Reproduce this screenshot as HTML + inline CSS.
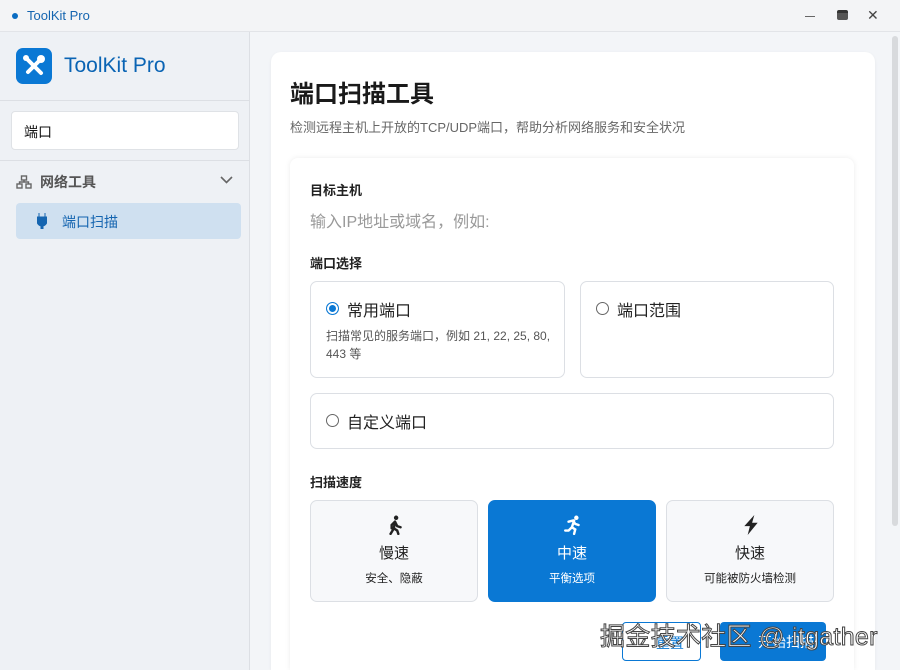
<!DOCTYPE html>
<html style="height:670px;overflow:hidden"><head><meta charset="utf-8"><style>
*{box-sizing:border-box;margin:0;padding:0}
body{width:900px;height:670px;overflow:hidden;font-family:"Liberation Sans","Noto Sans CJK SC",sans-serif;background:#f3f5f8;position:relative;color:#222}
.tb{position:absolute;left:0;top:0;width:900px;height:32px;background:#f3f4f6;border-bottom:1px solid #e2e4e8}
.tb .dot{position:absolute;left:12px;top:13px;width:6px;height:6px;border-radius:50%;background:#0a6cc2}
.tb .t{position:absolute;left:27px;top:8px;font-size:13px;color:#1565b0}
.sb{position:absolute;left:0;top:32px;width:250px;height:638px;background:#eef1f5;border-right:1px solid #dcdfe4}
.logo{position:absolute;left:16px;top:16px;width:36px;height:36px;border-radius:7px;background:#0a78d4}
.brand{position:absolute;left:64px;top:22px;font-size:21px;color:#0a64b4}
.hr{position:absolute;left:0;width:249px;height:1px;background:#dcdfe4}
.search{position:absolute;left:11px;top:79px;width:228px;height:39px;background:#fff;border:1px solid #dfe2e6;border-radius:4px;font-size:14px;padding:10px 12px;color:#111}
.grp{position:absolute;left:16px;top:140px;font-size:14px;color:#555;font-weight:bold}
.item{position:absolute;left:16px;top:171px;width:225px;height:36px;background:#cfe0f0;border-radius:4px;font-size:14px;color:#1565b0;padding:9px 0 0 46px}
.card{position:absolute;left:271px;top:52px;width:604px;height:618px;background:#fff;border-radius:10px 10px 0 0;box-shadow:0 1px 3px rgba(0,0,0,.06)}
h1{position:absolute;left:290px;top:74px;font-size:24px;font-weight:bold;color:#1a1a1a}
.sub{position:absolute;left:290px;top:117px;font-size:13px;color:#666}
.form{position:absolute;left:290px;top:158px;width:564px;height:512px;background:#fff;border-radius:8px 8px 0 0;box-shadow:0 0 6px rgba(0,0,0,.08)}
.lbl{position:absolute;font-size:13px;font-weight:bold;color:#222}
.opt{position:absolute;border:1px solid #dcdfe4;border-radius:7px;background:#fff}
.radio{position:absolute;width:13px;height:13px;border-radius:50%;border:1px solid #666;background:#fff}
.radio.on{border:1px solid #0a78d4;box-shadow:inset 0 0 0 2px #fff;background:#0a78d4}
.ot{position:absolute;font-size:16px;color:#222}
.sp{position:absolute;top:500px;width:168px;height:102px;border:1px solid #dcdfe4;border-radius:7px;background:#f7f8fa;text-align:center}
.sp .n{position:absolute;top:41px;width:100%;font-size:15px}
.sp .d{position:absolute;top:69px;width:100%;font-size:11.5px}
.sp svg{position:absolute;left:75px;top:14px}
.blue{background:#0a78d4;border-color:#0a78d4;color:#fff}
.btn1{position:absolute;left:622px;top:622px;width:79px;height:39px;border:1px solid #0a78d4;border-radius:4px;background:#fff;color:#0a78d4;font-size:14px;padding:10px 0 0 33px}
.btn2{position:absolute;left:720px;top:622px;width:106px;height:39px;border-radius:4px;background:#0a78d4;color:#fff;font-size:14px;padding:10px 0 0 38px}
.wm{position:absolute;left:600px;top:617px;font-size:25px;color:#fff;-webkit-text-stroke:1px #444;letter-spacing:0.3px}
.scroll{position:absolute;left:892px;top:36px;width:6px;height:490px;background:#d8dadd;border-radius:3px}
</style></head><body>
<div class="tb"><div class="dot"></div><div class="t">ToolKit Pro</div>
<div style="position:absolute;left:805px;top:16px;width:10px;height:1px;background:#666"></div>
<div style="position:absolute;left:837px;top:10px;width:11px;height:10px;border-radius:2px;background:#555;border-top:3px solid #333"></div>
<div style="position:absolute;left:867px;top:7px;font-size:14px;color:#444">✕</div></div>
<div class="sb">
<div class="logo"><svg width="36" height="36" viewBox="0 0 36 36"><g stroke="#fff" stroke-width="4" stroke-linecap="round"><line x1="11" y1="11" x2="25" y2="25"/><line x1="25" y1="11" x2="12" y2="24"/></g><circle cx="25" cy="11" r="4" fill="#fff"/><circle cx="10" cy="10" r="3" fill="#fff"/></svg></div>
<div class="brand">ToolKit Pro</div>
<div class="hr" style="top:68px"></div>
<div class="search">端口</div>
<div class="hr" style="top:128px"></div>
<svg style="position:absolute;left:16px;top:143px" width="16" height="14" viewBox="0 0 16 14"><g fill="none" stroke="#666" stroke-width="1.4"><rect x="5.5" y="1" width="5" height="4"/><rect x="1" y="9" width="5" height="4"/><rect x="10" y="9" width="5" height="4"/><path d="M8 5v2M3.5 9V7h9v2"/></g></svg>
<div class="grp" style="left:40px">网络工具</div>
<svg style="position:absolute;left:220px;top:144px" width="13" height="8" viewBox="0 0 13 8"><path d="M1 1l5.5 5.5L12 1" fill="none" stroke="#666" stroke-width="1.6"/></svg>
<div class="item"><svg style="position:absolute;left:21px;top:10px" width="10" height="16" viewBox="0 0 10 16"><path d="M2 0v4M8 0v4M0 4h10v4a5 5 0 0 1-10 0z M4 12h2v4H4z" fill="#1565b0" stroke="#1565b0"/></svg>端口扫描</div>
</div>
<div class="scroll"></div>
<div class="card"></div>
<h1>端口扫描工具</h1>
<div class="sub">检测远程主机上开放的TCP/UDP端口，帮助分析网络服务和安全状况</div>
<div class="form"></div>
<div class="lbl" style="left:310px;top:180px">目标主机</div>
<div style="position:absolute;left:310px;top:208px;font-size:16px;color:#999">输入IP地址或域名，例如:</div>
<div class="lbl" style="left:310px;top:253px">端口选择</div>
<div class="opt" style="left:310px;top:281px;width:255px;height:97px"></div>
<div class="radio on" style="left:326px;top:302px"></div>
<div class="ot" style="left:347px;top:297px">常用端口</div>
<div style="position:absolute;left:326px;top:327px;width:230px;font-size:12px;line-height:18px;color:#555">扫描常见的服务端口，例如 21, 22, 25, 80, 443 等</div>
<div class="opt" style="left:580px;top:281px;width:254px;height:97px"></div>
<div class="radio" style="left:596px;top:302px"></div>
<div class="ot" style="left:617px;top:297px">端口范围</div>
<div class="opt" style="left:310px;top:393px;width:524px;height:56px"></div>
<div class="radio" style="left:326px;top:414px"></div>
<div class="ot" style="left:347px;top:409px">自定义端口</div>
<div class="lbl" style="left:310px;top:472px">扫描速度</div>
<div class="sp" style="left:310px"><svg width="18" height="20" viewBox="0 0 16 18"><circle cx="9" cy="2.5" r="2" fill="#222"/><path d="M8 6l-3 3v3M8 6l2 4 3 1M8 6l-1 6-3 5M7 12l3 2 1 3" fill="none" stroke="#222" stroke-width="2.2" stroke-linecap="round"/></svg><div class="n">慢速</div><div class="d">安全、隐蔽</div></div>
<div class="sp blue" style="left:488px"><svg width="18" height="20" viewBox="0 0 16 18"><circle cx="11" cy="2.5" r="2" fill="#fff"/><path d="M4 6l4-1 2 3 3 1M9 5l-2 6 3 2-1 4M7 11l-3 3-3 0" fill="none" stroke="#fff" stroke-width="2.2" stroke-linecap="round"/></svg><div class="n">中速</div><div class="d">平衡选项</div></div>
<div class="sp" style="left:666px"><svg width="18" height="20" viewBox="0 0 16 18"><path d="M11 0L2 10h5l-2 8 9-11H9z" fill="#222"/></svg><div class="n">快速</div><div class="d">可能被防火墙检测</div></div>
<div class="btn1">重置</div>
<div class="btn2">开始扫描</div>
<div class="wm">掘金技术社区 @ itgather</div>
</body></html>
